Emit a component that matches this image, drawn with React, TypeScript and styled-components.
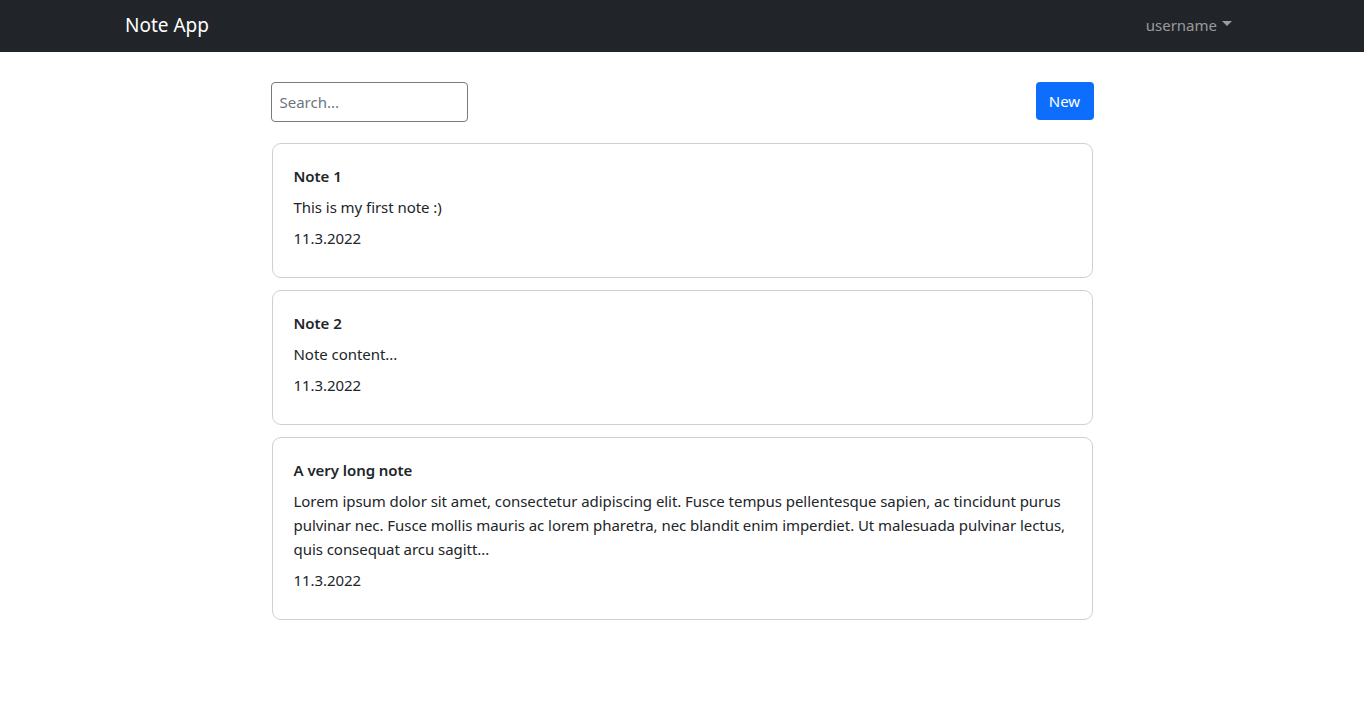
import React from "react";
import styled, { createGlobalStyle } from "styled-components";

const Global = createGlobalStyle`
  * { box-sizing: border-box; }
  body {
    margin: 0;
    font-family: "Noto Sans", "Open Sans", sans-serif;
    font-size: 15px;
    line-height: 24px;
    color: #212529;
    background: #fff;
  }
`;

const NavBar = styled.nav`
  height: 52px;
  background: #212529;
`;

const NavInner = styled.div`
  width: 1140px;
  margin: 0 auto;
  padding: 0 12px;
  height: 100%;
  display: flex;
  align-items: center;
  justify-content: space-between;
`;

const Brand = styled.a`
  color: #fff;
  font-size: 19px;
  line-height: 30px;
  text-decoration: none;
  margin-left: 1px;
  margin-top: -3px;
`;

const UserMenu = styled.button`
  display: flex;
  align-items: center;
  gap: 5px;
  background: none;
  border: none;
  padding: 0 8px;
  margin-top: -3px;
  font: inherit;
  font-size: 15px;
  color: rgba(255, 255, 255, 0.55);
  cursor: pointer;
`;

const Caret = styled.span`
  width: 0;
  height: 0;
  border-left: 5px solid transparent;
  border-right: 5px solid transparent;
  border-top: 5px solid rgba(255, 255, 255, 0.55);
  margin-top: -2px;
`;

const Main = styled.main`
  width: 823px;
  margin: 30px auto 0;
`;

const Toolbar = styled.div`
  display: flex;
  justify-content: space-between;
  align-items: flex-start;
  margin-bottom: 21px;
`;

const SearchInput = styled.input`
  width: 197px;
  height: 40px;
  border: 1px solid #7a7a7a;
  border-radius: 4px;
  padding: 0 8px;
  font: inherit;
  font-size: 15px;
  color: #212529;
  outline: none;
  &::placeholder {
    color: #6c757d;
  }
`;

const NewButton = styled.button`
  width: 58px;
  height: 38px;
  background: #0d6efd;
  border: none;
  border-radius: 4px;
  color: #fff;
  font: inherit;
  font-size: 15px;
  cursor: pointer;
`;

const List = styled.div`
  display: flex;
  flex-direction: column;
  gap: 12px;
  padding-left: 1px;
  width: 822px;
`;

const Card = styled.div`
  border: 1px solid #d0d0d0;
  border-radius: 9px;
  padding: 20px 21px;
`;

const Line = styled.p<{ $bold?: boolean }>`
  margin: 0 0 7px;
  letter-spacing: -0.05px;
  font-weight: ${(p) => (p.$bold ? 600 : 400)};
`;

const notes = [
  { title: "Note 1", body: "This is my first note :)", date: "11.3.2022" },
  { title: "Note 2", body: "Note content...", date: "11.3.2022" },
  {
    title: "A very long note",
    body:
      "Lorem ipsum dolor sit amet, consectetur adipiscing elit. Fusce tempus pellentesque sapien, ac tincidunt purus pulvinar nec. Fusce mollis mauris ac lorem pharetra, nec blandit enim imperdiet. Ut malesuada pulvinar lectus, quis consequat arcu sagitt...",
    date: "11.3.2022",
  },
];

export default function App() {
  return (
    <>
      <Global />
      <NavBar>
        <NavInner>
          <Brand href="#">Note App</Brand>
          <UserMenu>
            username
            <Caret />
          </UserMenu>
        </NavInner>
      </NavBar>
      <Main>
        <Toolbar>
          <SearchInput placeholder="Search..." />
          <NewButton>New</NewButton>
        </Toolbar>
        <List>
          {notes.map((n, i) => (
            <Card key={i}>
              <Line $bold>{n.title}</Line>
              <Line>{n.body}</Line>
              <Line>{n.date}</Line>
            </Card>
          ))}
        </List>
      </Main>
    </>
  );
}
